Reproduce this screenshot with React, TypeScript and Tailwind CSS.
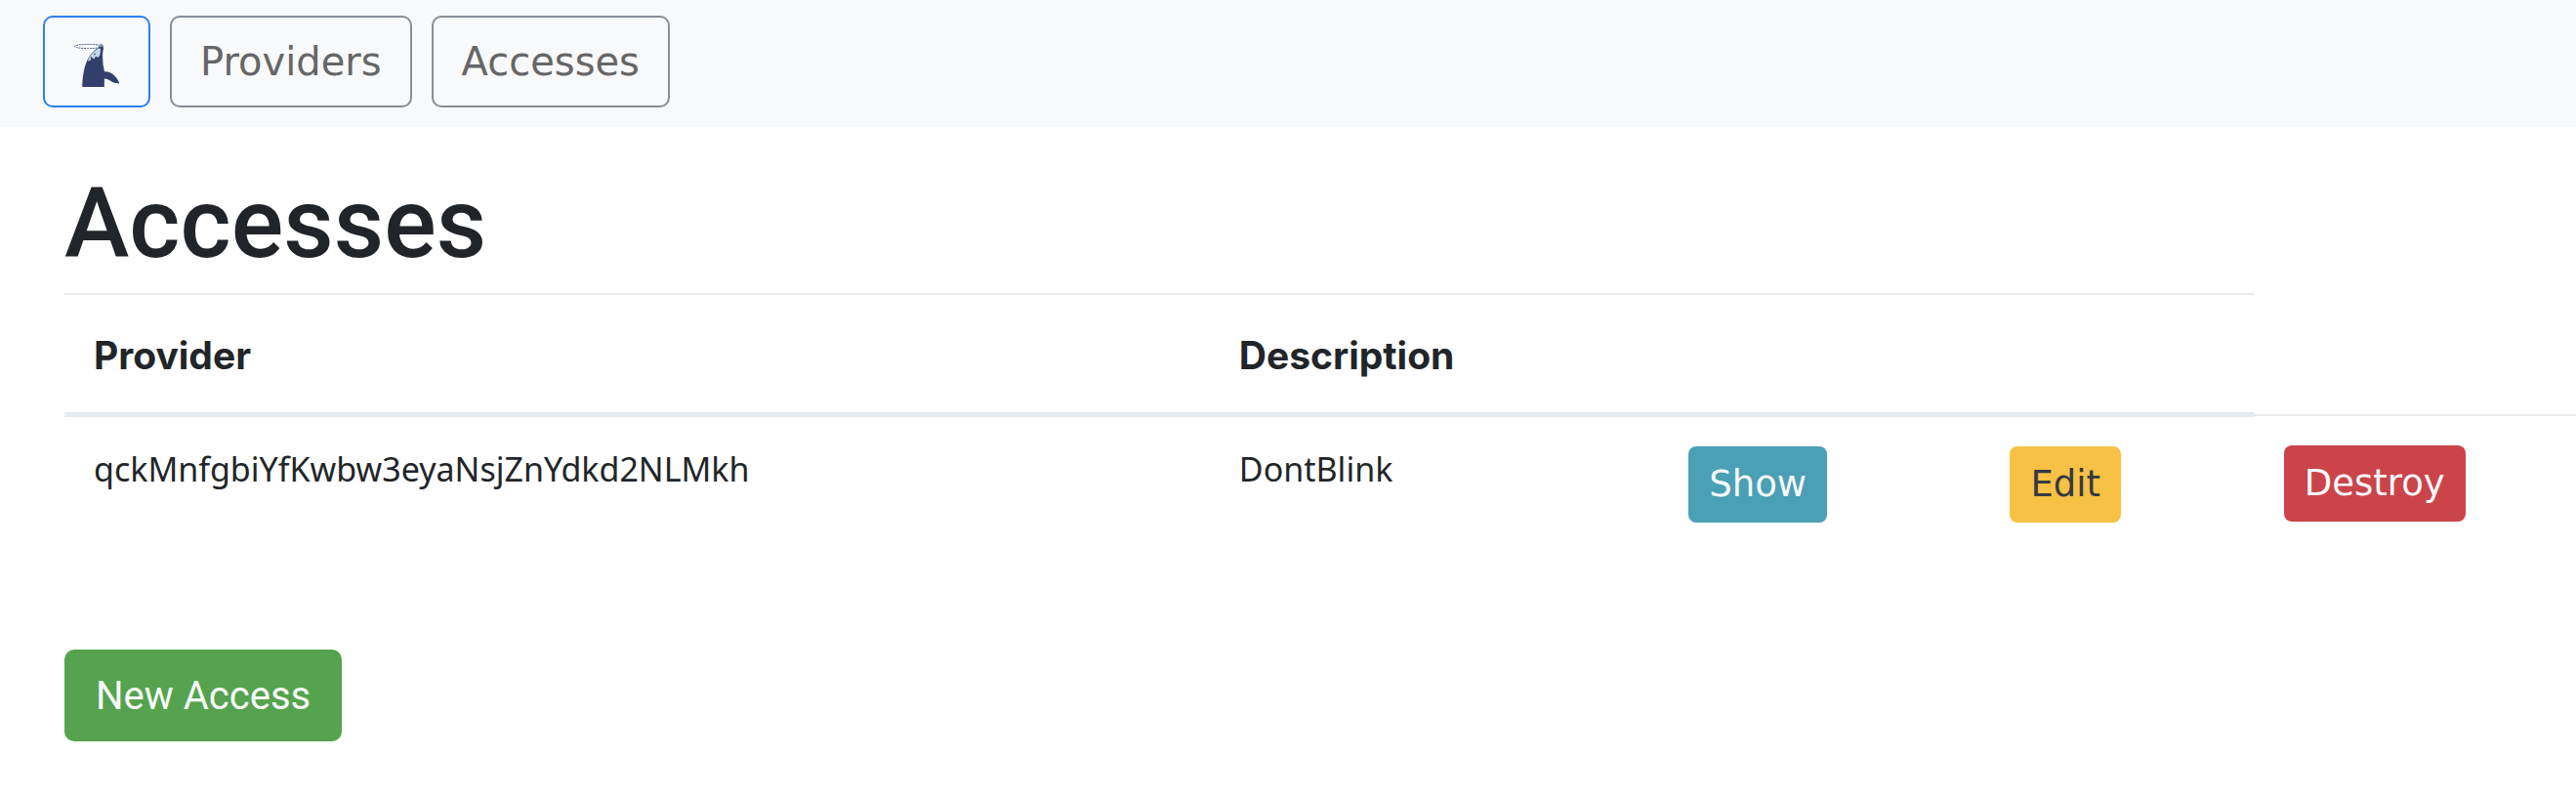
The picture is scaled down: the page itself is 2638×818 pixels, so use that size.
import { clsx } from 'clsx';

interface Access {
  provider: string;
  description: string;
}

const accesses: Access[] = [
  { provider: 'qckMnfgbiYfKwbw3eyaNsjZnYdkd2NLMkh', description: 'DontBlink' },
];

const WhaleLogo = () => (
  <svg viewBox="0 0 48 46" className="h-[46px] w-[48px]" aria-hidden="true">
    <path d="M8.200 45 C8.500 33 10.500 21 16 13 C19 9 22 6.500 25 4.500 L26 2 L29 1.500 L30 5 L29 11 L29.500 22 L31 29.500 L30.800 45 Z" fill="#323f6b" />
    <path d="M14 18.500 C16 12.500 20 8.500 25.500 5 L27 6.500 L26.500 12 L24.500 15 L22 13.500 L20.500 16.500 L18 15 L16.500 18 Z" fill="#c3d7ec" />
    <path d="M16.800 14.500 L18.500 16 M20.500 12 L21.500 11" stroke="#323f6b" strokeWidth="1.300" />
    <path d="M30.500 29.500 C36 28.500 43 33 46 40.500 C46.500 42 44.500 41.500 43.500 41 C38 41.500 37 36.500 30.500 36.500 Z" fill="#323f6b" />
    <ellipse cx="14.500" cy="3.500" rx="14" ry="2.100" fill="none" stroke="#4d5a82" strokeWidth="1" strokeDasharray="2 0.800" />
    <path d="M24.500 3 L27.500 0.500 L29.500 3 L27 4 Z" fill="#8f9fbd" />
  </svg>
);

interface NavButtonProps {
  href: string;
  children: React.ReactNode;
}

const NavButton = ({ href, children }: NavButtonProps) => (
  <a
    href={href}
    className="flex h-[94px] items-center rounded-[10px] border-2 border-[#868e96] px-[29px] text-[40px] leading-[60px] text-[#666666]"
  >
    {children}
  </a>
);

const Navbar = () => (
  <nav className="flex gap-5 bg-[#f8f9fa] px-11 pt-4 pb-5">
    <a
      href="#home"
      aria-label="Home"
      className="flex h-[94px] items-end rounded-[10px] border-2 border-[#2b7ff5] pr-[28px] pb-[18px] pl-[30px]"
    >
      <WhaleLogo />
    </a>
    <NavButton href="#providers">Providers</NavButton>
    <NavButton href="#accesses">Accesses</NavButton>
  </nav>
);

const variants = {
  info: 'bg-[#4aa0b5] text-[#f8f9fa]',
  warning: 'bg-[#f6c144] text-[#343a40]',
  danger: 'bg-[#cb444a] text-[#f8f9fa]',
};

interface ActionButtonProps {
  variant: keyof typeof variants;
  children: React.ReactNode;
}

const ActionButton = ({ variant, children }: ActionButtonProps) => (
  <button
    type="button"
    className={clsx(
      "block h-[78px] rounded-lg px-[21px] font-['DejaVu_Sans',sans-serif] text-[37px] leading-[54px]",
      variants[variant]
    )}
  >
    {children}
  </button>
);

const AccessTable = () => (
  <table className="w-full table-fixed border-collapse text-left">
    <colgroup>
      <col className="w-[45.6%]" />
      <col className="w-[17.9%]" />
      <col className="w-[12.8%]" />
      <col className="w-[10.9%]" />
      <col />
    </colgroup>
    <thead className="font-[Inter,sans-serif] text-[39px] leading-[60px]">
      <tr>
        <th className="border-t-2 border-b-[5px] border-[#e9ecef] px-[30px] pt-8 pb-7 font-bold">Provider</th>
        <th className="border-t-2 border-b-[5px] border-[#e9ecef] px-[30px] pt-8 pb-7 font-bold">Description</th>
        <th colSpan={2} className="border-t-2 border-b-[5px] border-[#e9ecef]"></th>
      </tr>
    </thead>
    <tbody className="font-['Noto_Sans',sans-serif] text-[34px] leading-[46px]">
      {accesses.map((access) => (
        <tr key={access.provider} className="align-top">
          <td className="border-t-2 border-[#e9ecef] px-[30px] py-[30px]">{access.provider}</td>
          <td className="border-t-2 border-[#e9ecef] px-[30px] py-[30px]">{access.description}</td>
          <td className="border-t-2 border-[#e9ecef] px-[30px] py-[30px]">
            <ActionButton variant="info">Show</ActionButton>
          </td>
          <td className="border-t-2 border-[#e9ecef] px-[30px] py-[30px]">
            <ActionButton variant="warning">Edit</ActionButton>
          </td>
          <td className="border-t-2 border-[#e9ecef] px-[30px] py-[30px]">
            <ActionButton variant="danger">Destroy</ActionButton>
          </td>
        </tr>
      ))}
    </tbody>
  </table>
);

const App = () => {
  return (
    <div className="min-h-screen bg-white font-['DejaVu_Sans',sans-serif] text-[#212529]">
      <Navbar />
      <main className="pt-11 pl-[66px]">
        <h1 className="mb-4 font-[Roboto,sans-serif] text-[100px] leading-[110px] font-medium">Accesses</h1>
        <AccessTable />
        <button
          type="button"
          className="mt-[100px] h-[94px] rounded-[10px] bg-[#55a34f] px-8 pt-0.5 font-[Roboto,sans-serif] text-[40px] leading-[60px] text-[#f8f9fa]"
        >
          New Access
        </button>
      </main>
    </div>
  );
};

export default App;
